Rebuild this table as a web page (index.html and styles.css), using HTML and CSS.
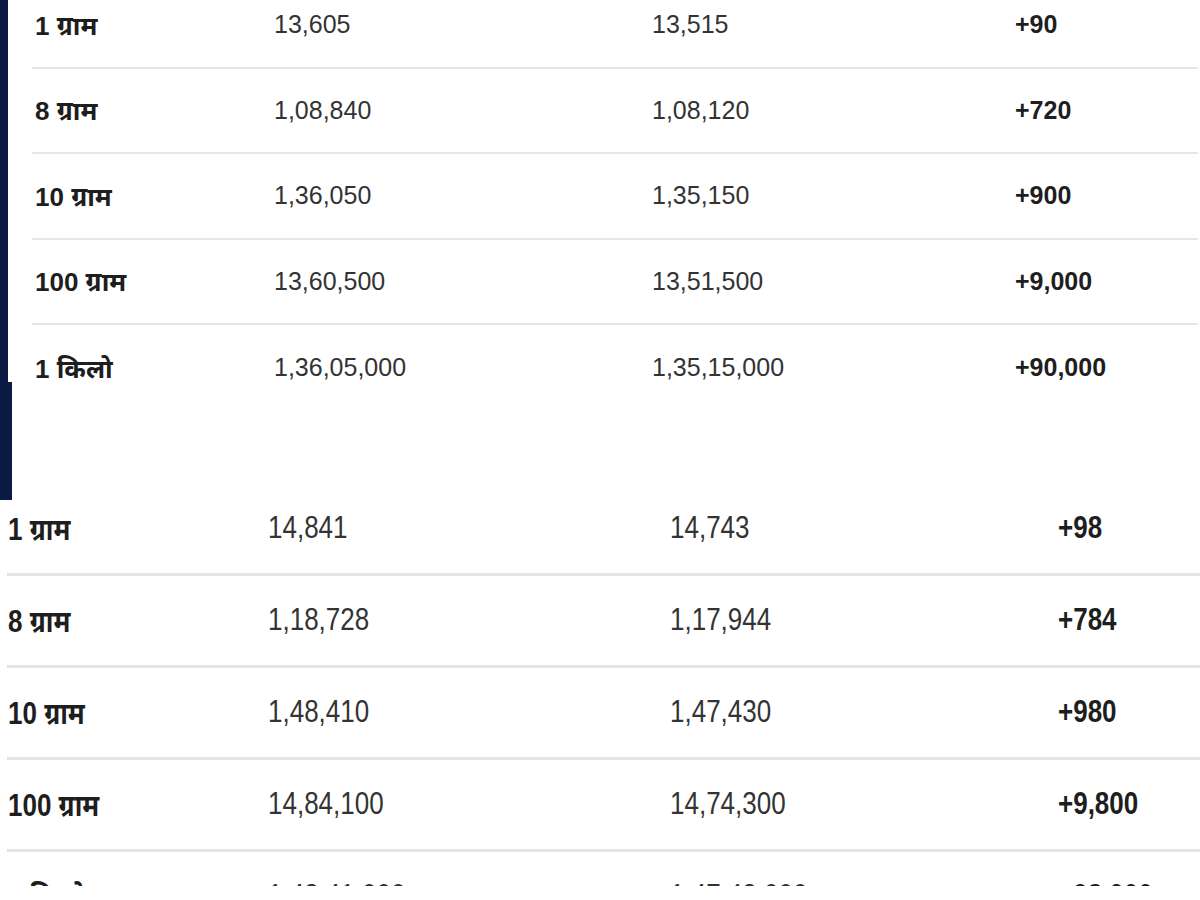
FILE: index.html
```html
<!DOCTYPE html>
<html lang="hi">
<head>
<meta charset="utf-8">
<title>सोने का भाव</title>
<link rel="stylesheet" href="styles.css">
</head>
<body>
<div class="page">
  <section class="top">
    <div class="bar"><div class="bar-a"></div><div class="bar-b"></div></div>
    <div class="table top-table">
      <div class="row"><span class="c c1">1 ग्राम</span><span class="c">13,605</span><span class="c">13,515</span><span class="c c4">+90</span></div>
      <div class="row"><span class="c c1">8 ग्राम</span><span class="c">1,08,840</span><span class="c">1,08,120</span><span class="c c4">+720</span></div>
      <div class="row"><span class="c c1">10 ग्राम</span><span class="c">1,36,050</span><span class="c">1,35,150</span><span class="c c4">+900</span></div>
      <div class="row"><span class="c c1">100 ग्राम</span><span class="c">13,60,500</span><span class="c">13,51,500</span><span class="c c4">+9,000</span></div>
      <div class="row"><span class="c c1">1 किलो</span><span class="c">1,36,05,000</span><span class="c">1,35,15,000</span><span class="c c4">+90,000</span></div>
    </div>
  </section>
  <section class="bottom">
    <div class="table bottom-table">
      <div class="row"><span class="c c1">1 ग्राम</span><span class="c">14,841</span><span class="c">14,743</span><span class="c c4">+98</span></div>
      <div class="row"><span class="c c1">8 ग्राम</span><span class="c">1,18,728</span><span class="c">1,17,944</span><span class="c c4">+784</span></div>
      <div class="row"><span class="c c1">10 ग्राम</span><span class="c">1,48,410</span><span class="c">1,47,430</span><span class="c c4">+980</span></div>
      <div class="row"><span class="c c1">100 ग्राम</span><span class="c">14,84,100</span><span class="c">14,74,300</span><span class="c c4">+9,800</span></div>
      <div class="row"><span class="c c1">1 किलो</span><span class="c">1,48,41,000</span><span class="c">1,47,43,000</span><span class="c c4">+98,000</span></div>
    </div>
  </section>
</div>
</body>
</html>
```

FILE: styles.css
```css
html, body {
  margin: 0;
  padding: 0;
  background: #ffffff;
}

body {
  font-family: "Liberation Sans", Arial, "Noto Sans", sans-serif;
  color: #333333;
}

.page {
  width: 1200px;
  height: 900px;
  overflow: hidden;
}

/* ---------- top table ---------- */
.top {
  display: flex;
  height: 500px;
  overflow: hidden;
}

.bar {
  flex: none;
  width: 12px;
  display: flex;
  flex-direction: column;
}

.bar-a {
  width: 8px;
  height: 382px;
  background: #0b1a44;
}

.bar-b {
  width: 12px;
  height: 118px;
  background: #0b1a44;
}

.top-table {
  margin-left: 20px;
  margin-top: -17px;
  width: 1166px;
}

.top-table .row {
  display: grid;
  grid-template-columns: 239px 378px 363px 1fr;
  align-items: center;
  box-sizing: border-box;
  height: 85.5px;
  padding-left: 3px;
  border-bottom: 2px solid #e6e6e6;
  font-size: 25px;
}

.top-table .row:last-child {
  border-bottom: none;
}

.top-table .c1 {
  font-size: 26px;
}

/* ---------- bottom table ---------- */
.bottom {
  height: 386px;
  overflow: hidden;
}

.bottom-table {
  margin-top: -16px;
  margin-left: 7px;
}

.bottom-table .row {
  display: grid;
  grid-template-columns: 260px 402px 388px 1fr;
  align-items: center;
  box-sizing: border-box;
  height: 92px;
  padding-left: 1px;
  padding-bottom: 2px;
  border-bottom: 3px solid #e4e4e4;
  font-size: 26px;
}

.bottom-table .c {
  display: inline-block;
  transform: scaleY(1.18);
  transform-origin: center;
}

/* ---------- cells ---------- */
.c {
  white-space: nowrap;
  justify-self: start;
}

.c1,
.c4 {
  font-weight: bold;
  color: #1e1e1e;
}
```
